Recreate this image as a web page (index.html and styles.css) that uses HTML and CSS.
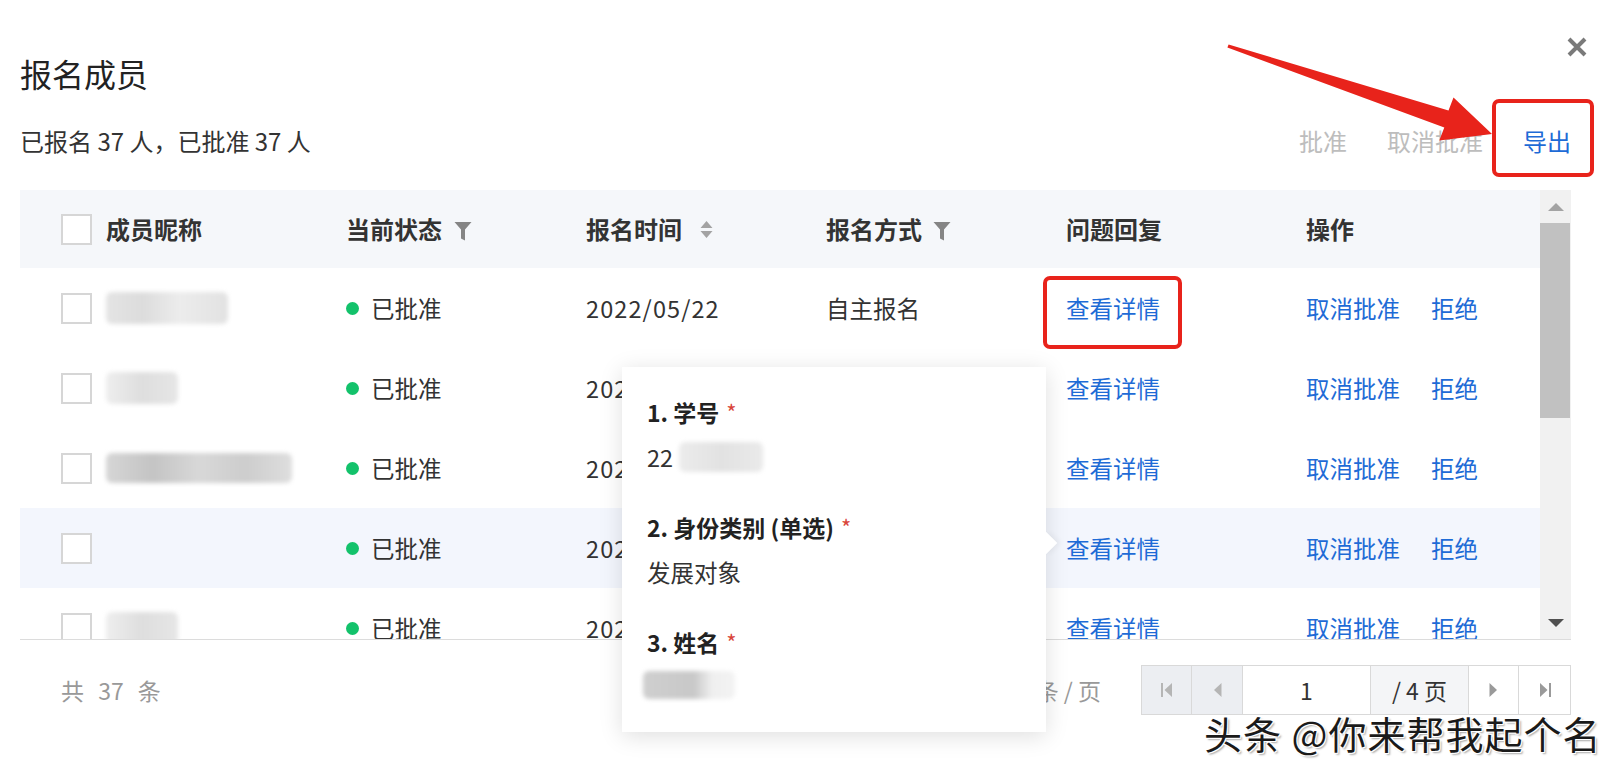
FILE: index.html
```html
<!DOCTYPE html>
<html lang="zh-CN">
<head>
<meta charset="utf-8">
<title>报名成员</title>
<link rel="stylesheet" href="styles.css">
</head>
<body>
<div class="dialog">
  <button class="close" aria-label="关闭">
    <svg width="20" height="20" viewBox="0 0 20 20"><path d="M2 2 L18 18 M18 2 L2 18" stroke="#7a7a7a" stroke-width="4"/></svg>
  </button>
  <h1 class="title">报名成员</h1>
  <div class="toolbar">
    <div class="summary">已报名 37 人，已批准 37 人</div>
    <div class="actions">
      <span class="act disabled">批准</span>
      <span class="act disabled">取消批准</span>
      <span class="act primary export">导出</span>
    </div>
  </div>

  <div class="table">
    <div class="table-main">
      <div class="row head">
        <div class="cell first"><span class="checkbox"></span><span>成员昵称</span></div>
        <div class="cell">当前状态<svg class="ico-filter" width="18" height="20" viewBox="0 0 18 20"><path d="M0.5 1 H17.5 L11 8.5 V19.5 L7 17.5 V8.5 Z" fill="#858585"/></svg></div>
        <div class="cell">报名时间<svg class="ico-sort" width="13" height="19" viewBox="0 0 13 19"><path d="M6.5 1 L12.5 8 H0.5 Z M0.5 11 H12.5 L6.5 18 Z" fill="#a3a3a3"/></svg></div>
        <div class="cell">报名方式<svg class="ico-filter ico-filter2" width="18" height="20" viewBox="0 0 18 20"><path d="M0.5 1 H17.5 L11 8.5 V19.5 L7 17.5 V8.5 Z" fill="#858585"/></svg></div>
        <div class="cell">问题回复</div>
        <div class="cell">操作</div>
      </div>

      <div class="row">
        <div class="cell first"><span class="checkbox"></span><span class="blob blob-a"></span></div>
        <div class="cell"><span class="dot"></span>已批准</div>
        <div class="cell date">2022/05/22</div>
        <div class="cell">自主报名</div>
        <div class="cell"><span class="link marked">查看详情</span></div>
        <div class="cell ops"><span class="link">取消批准</span><span class="link">拒绝</span></div>
      </div>

      <div class="row">
        <div class="cell first"><span class="checkbox"></span><span class="blob blob-b"></span></div>
        <div class="cell"><span class="dot"></span>已批准</div>
        <div class="cell date">2022/05/22</div>
        <div class="cell">自主报名</div>
        <div class="cell"><span class="link">查看详情</span></div>
        <div class="cell ops"><span class="link">取消批准</span><span class="link">拒绝</span></div>
      </div>

      <div class="row">
        <div class="cell first"><span class="checkbox"></span><span class="blob blob-c"></span></div>
        <div class="cell"><span class="dot"></span>已批准</div>
        <div class="cell date">2022/05/22</div>
        <div class="cell">自主报名</div>
        <div class="cell"><span class="link">查看详情</span></div>
        <div class="cell ops"><span class="link">取消批准</span><span class="link">拒绝</span></div>
      </div>

      <div class="row hover">
        <div class="cell first"><span class="checkbox"></span></div>
        <div class="cell"><span class="dot"></span>已批准</div>
        <div class="cell date">2022/05/22</div>
        <div class="cell">自主报名</div>
        <div class="cell"><span class="link">查看详情</span></div>
        <div class="cell ops"><span class="link">取消批准</span><span class="link">拒绝</span></div>
      </div>

      <div class="row">
        <div class="cell first"><span class="checkbox"></span><span class="blob blob-b"></span></div>
        <div class="cell"><span class="dot"></span>已批准</div>
        <div class="cell date">2022/05/22</div>
        <div class="cell">自主报名</div>
        <div class="cell"><span class="link">查看详情</span></div>
        <div class="cell ops"><span class="link">取消批准</span><span class="link">拒绝</span></div>
      </div>
    </div>
    <div class="scrollbar">
      <span class="sb-btn"><span class="tri-up"></span></span>
      <span class="sb-thumb"></span>
      <span class="sb-space"></span>
      <span class="sb-btn"><span class="tri-down"></span></span>
    </div>
  </div>

  <div class="footer">
    <div class="total">共 37 条</div>
    <div class="pager-wrap">
      <div class="per-page">10 条 / 页</div>
      <div class="pager">
        <span class="pg pg-dis"><svg width="12" height="16" viewBox="0 0 12 16"><rect x="0" y="1" width="2" height="14" fill="#b5b5b5"/><path d="M11 1 L3.5 8 L11 15 Z" fill="#b5b5b5"/></svg></span>
        <span class="pg pg-dis pg-prev"><svg width="9" height="16" viewBox="0 0 9 16"><path d="M8.5 1 L1 8 L8.5 15 Z" fill="#b5b5b5"/></svg></span>
        <span class="pg pg-input">1</span>
        <span class="pg pg-total">/ 4 页</span>
        <span class="pg"><svg width="9" height="16" viewBox="0 0 9 16"><path d="M0.5 1 L8 8 L0.5 15 Z" fill="#9a9a9a"/></svg></span>
        <span class="pg pg-last"><svg width="12" height="16" viewBox="0 0 12 16"><path d="M1 1 L8.5 8 L1 15 Z" fill="#9a9a9a"/><rect x="10" y="1" width="2" height="14" fill="#9a9a9a"/></svg></span>
      </div>
    </div>
  </div>

  <div class="popover">
    <div class="q">
      <div class="q-title">1. 学号<span class="req">*</span></div>
      <div class="q-ans">22<span class="blob blob-id"></span></div>
    </div>
    <div class="q">
      <div class="q-title">2. 身份类别 (单选)<span class="req">*</span></div>
      <div class="q-ans">发展对象</div>
    </div>
    <div class="q">
      <div class="q-title">3. 姓名<span class="req">*</span></div>
      <div class="q-ans"><span class="blob blob-name"></span></div>
    </div>
  </div>
</div>

<svg class="annot-arrow" width="1616" height="781" viewBox="0 0 1616 781">
  <polygon points="1228.6,44.5 1448.5,110.6 1453.5,97.6 1492,134 1439.3,140.6 1444.3,127.6 1227.4,47.5" fill="#e8231b"/>
</svg>
<div class="watermark">头条 @你来帮我起个名</div>
</body>
</html>
```

FILE: styles.css
```css
* { box-sizing: border-box; }
html, body { margin: 0; padding: 0; background: #fff; }
body {
  position: relative;
  width: 1616px;
  height: 781px;
  overflow: hidden;
  font-family: "Noto Sans CJK SC", "Noto Sans", sans-serif;
  color: #333;
}

.dialog {
  position: relative;
  height: 781px;
  padding: 53px 45px 0 20px;
}

.close {
  position: absolute;
  top: 37px;
  right: 29px;
  width: 20px;
  height: 20px;
  padding: 0;
  border: 0;
  background: none;
}
.close svg { display: block; }

.title {
  margin: 0;
  font-size: 32px;
  line-height: 40px;
  font-weight: 400;
  color: #222;
}

.toolbar {
  margin-top: 23px;
  height: 50px;
  display: flex;
  align-items: center;
  justify-content: space-between;
  font-size: 24px;
  line-height: 32px;
}
.summary { color: #333; }
.actions { display: flex; gap: 40px; }
.act.disabled { color: #bdbdbd; }
.act.primary { color: #1e6bd6; }
.export { position: relative; }
.export::after {
  content: "";
  position: absolute;
  left: -31px;
  right: -23px;
  top: -26px;
  bottom: -20px;
  border: 4px solid #e8231b;
  border-radius: 7px;
}

/* table */
.table {
  margin-top: 24px;
  display: flex;
  height: 450px;
  border-bottom: 1px solid #dcdcdc;
}
.table-main {
  flex: 1;
  overflow: hidden;
}
.row {
  display: grid;
  grid-template-columns: 326px 240px 240px 240px 240px 1fr;
  align-items: center;
  height: 80px;
  font-size: 23.5px;
  line-height: 32px;
  color: #333;
}
.row.head {
  height: 78px;
  background: #f5f7fa;
  font-size: 24px;
  font-weight: 700;
  color: #333;
}
.row.hover { background: #f3f6fd; }
.cell {
  display: flex;
  align-items: center;
  white-space: nowrap;
}
.cell.first { padding-left: 41px; gap: 14px; }
.checkbox {
  width: 31px;
  height: 31px;
  border: 2px solid #d6d6d6;
  background: #fff;
  flex: none;
}
.ico-filter { margin-left: 12px; margin-top: 4px; }
.ico-filter2 { margin-left: 11px; }
.ico-sort { margin-left: 18px; }

.dot {
  width: 13px;
  height: 13px;
  border-radius: 50%;
  background: #13c26b;
  margin-right: 12px;
  flex: none;
}
.date { letter-spacing: 1.1px; }
.link { color: #1e6bd6; position: relative; }
.link.marked::after {
  content: "";
  position: absolute;
  left: -23px;
  right: -22px;
  top: -16px;
  bottom: -25px;
  border: 4px solid #e8231b;
  border-radius: 7px;
}
.ops { gap: 31px; }

.blob {
  display: inline-block;
  height: 32px;
  border-radius: 6px;
  filter: blur(2px);
  background: linear-gradient(90deg, #e4e4e4 0%, #dcdcdc 30%, #ececec 60%, #e2e2e2 100%);
}
.blob-a { width: 122px; }
.blob-b { width: 72px; background: linear-gradient(90deg, #eeeeee 0%, #dedede 50%, #e6e6e6 100%); }
.blob-c { width: 186px; height: 30px; background: linear-gradient(90deg, #d6d6d6 0%, #c4c4c4 25%, #d8d8d8 50%, #cdcdcd 75%, #dedede 100%); }

/* scrollbar */
.scrollbar {
  width: 31px;
  background: #f1f1f1;
  display: flex;
  flex-direction: column;
}
.sb-btn {
  height: 33px;
  display: flex;
  align-items: center;
  justify-content: center;
  flex: none;
}
.sb-thumb {
  height: 195px;
  background: #c1c1c1;
  flex: none;
  margin: 0 1px 0 0;
}
.sb-space { flex: 1; }
.tri-up {
  width: 0; height: 0;
  border-left: 8px solid transparent;
  border-right: 8px solid transparent;
  border-bottom: 8px solid #a3a3a3;
}
.tri-down {
  width: 0; height: 0;
  border-left: 8px solid transparent;
  border-right: 8px solid transparent;
  border-top: 8px solid #505050;
}

/* footer */
.footer {
  margin-top: 25px;
  height: 50px;
  display: flex;
  align-items: center;
  justify-content: space-between;
  font-size: 23px;
  color: #999;
}
.total { padding-left: 41px; word-spacing: 9px; }
.pager-wrap { display: flex; align-items: center; gap: 40px; }
.per-page { color: #999; }
.pager {
  display: flex;
  height: 50px;
  border: 1px solid #d9d9d9;
}
.pg {
  width: 50px;
  display: flex;
  align-items: center;
  justify-content: center;
  border-right: 1px solid #d9d9d9;
  background: #fff;
  color: #333;
}
.pg:last-child { border-right: 0; }
.pg-dis { background: #eceef2; }
.pg-prev { width: 51px; }
.pg-input { width: 128px; font-size: 23px; }
.pg-total { width: 98px; background: #f4f5f7; font-size: 23px; }
.pg-last { width: 51px; }

/* popover */
.popover {
  position: absolute;
  left: 622px;
  top: 367px;
  width: 424px;
  height: 365px;
  background: #fff;
  box-shadow: 0 4px 22px rgba(0, 0, 0, 0.13);
  padding: 29px 25px 0 25px;
}
.popover::after {
  content: "";
  position: absolute;
  right: -8px;
  top: 168px;
  width: 16px;
  height: 16px;
  background: #fff;
  transform: rotate(45deg);
  box-shadow: 3px -3px 5px rgba(0, 0, 0, 0.04);
}
.q { margin-bottom: 38px; }
.q-title {
  font-size: 23px;
  line-height: 32px;
  font-weight: 700;
  color: #222;
}
.req {
  color: #d9463b;
  font-size: 22px;
  font-weight: 400;
  margin-left: 7px;
  vertical-align: top;
  line-height: 30px;
}
.q-ans {
  margin-top: 13px;
  font-size: 23.5px;
  line-height: 32px;
  color: #333;
  display: flex;
  align-items: center;
}
.blob-id { width: 84px; height: 30px; margin-left: 6px; background: linear-gradient(90deg, #ececec 0%, #e2e2e2 50%, #eaeaea 100%); }
.blob-name { width: 92px; height: 28px; margin-left: -4px; background: linear-gradient(90deg, #cfcfcf 0%, #c8c8c8 55%, #efefef 75%, #f3f3f3 100%); }

/* annotations */
.annot-arrow {
  position: absolute;
  left: 0;
  top: 0;
  pointer-events: none;
}
.watermark {
  position: absolute;
  left: 1204px;
  top: 705px;
  font-size: 38px;
  line-height: 56px;
  letter-spacing: 1px;
  color: #1a1a1a;
  white-space: nowrap;
  text-shadow: 1px 1px 0 #fff, -1px -1px 0 #fff, 1px -1px 0 #fff, -1px 1px 0 #fff, 2px 2px 2px rgba(0,0,0,0.35);
}
```
